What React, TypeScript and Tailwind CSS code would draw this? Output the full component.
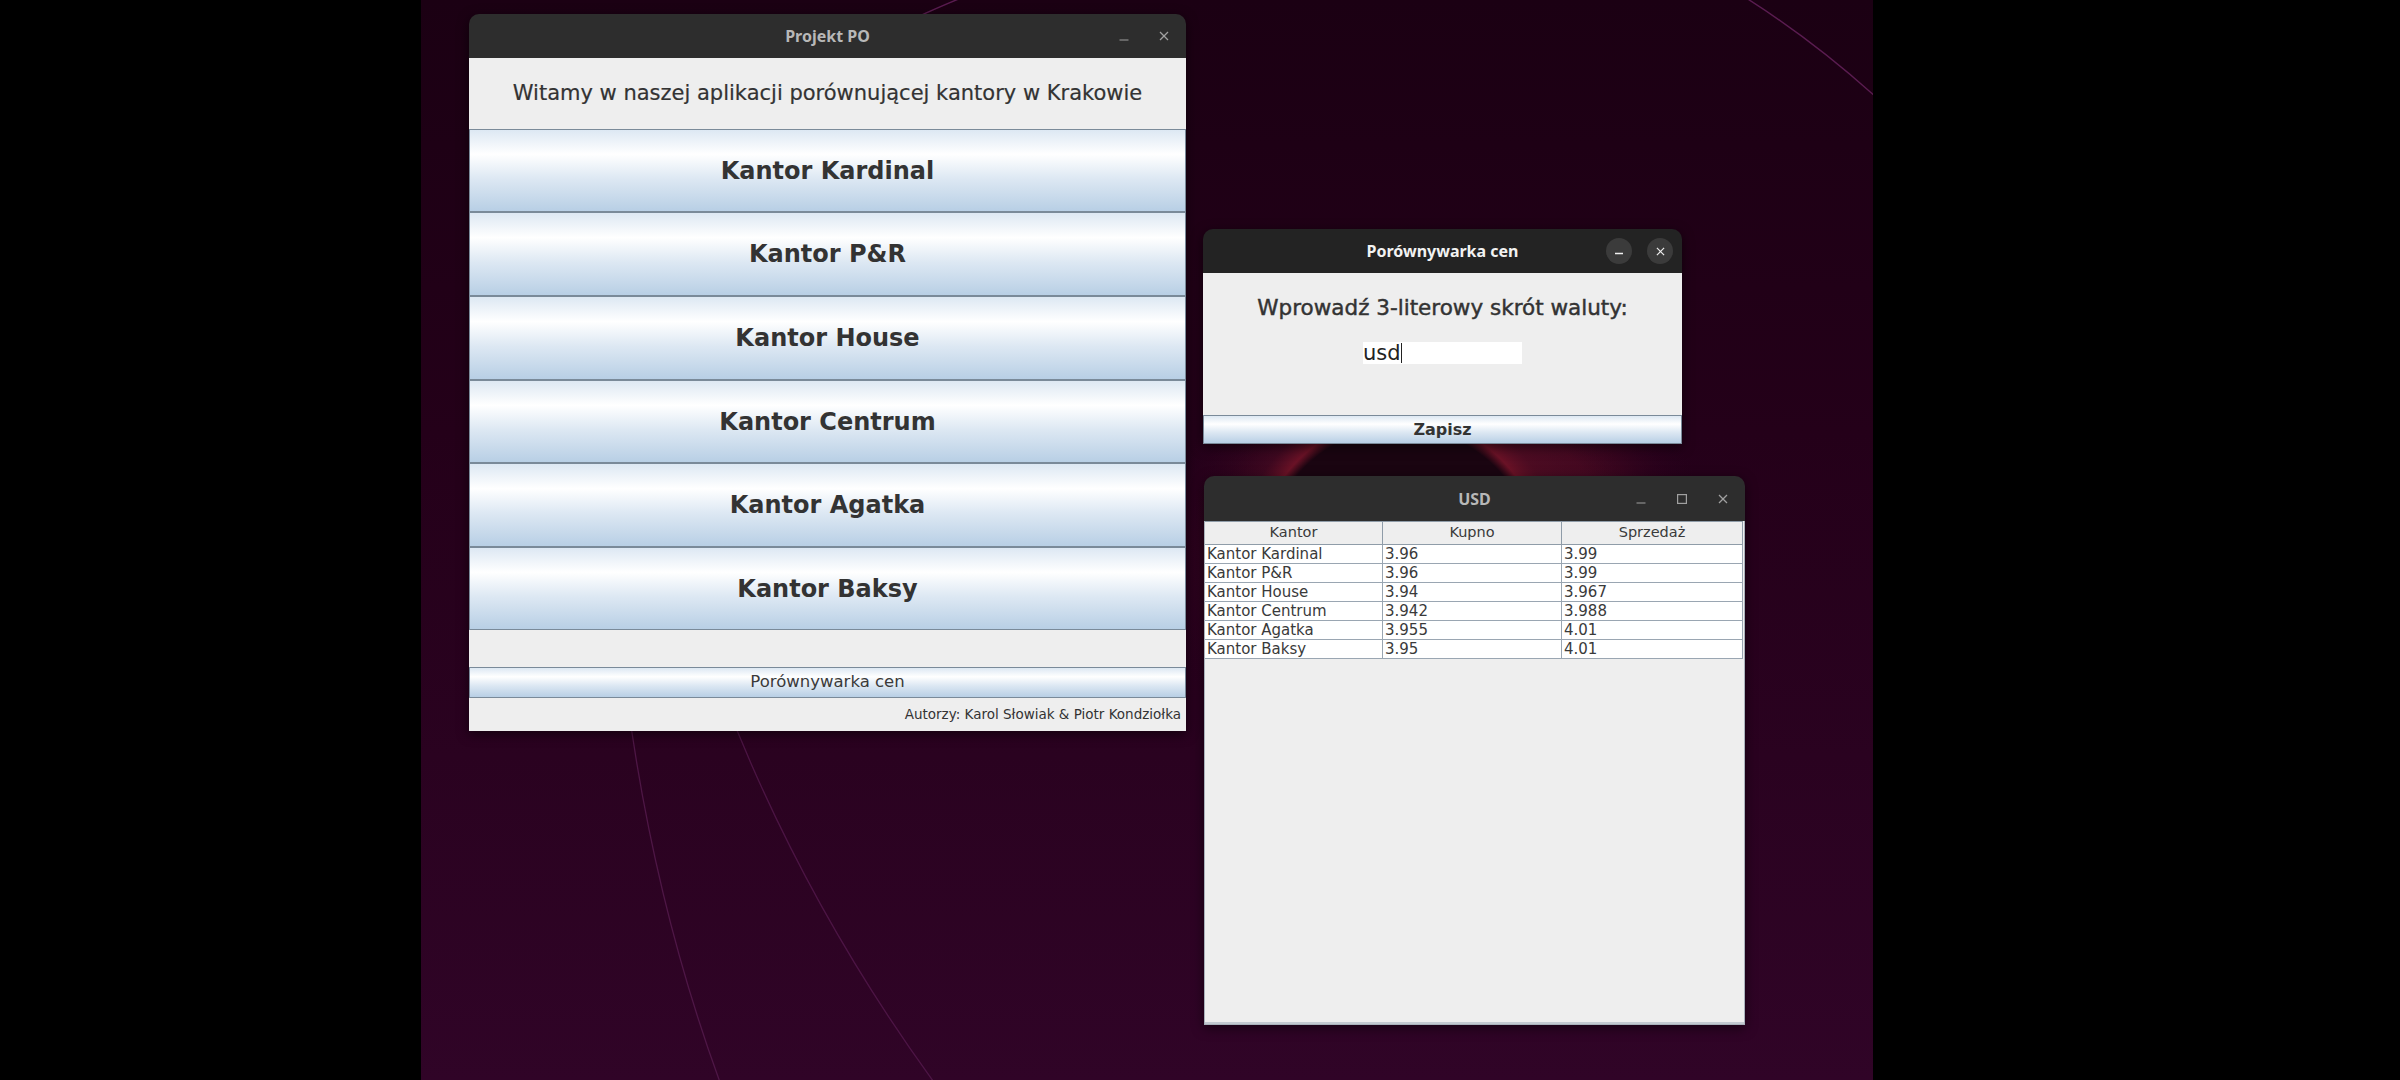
import React from "react";

const GRAD =
  "bg-[linear-gradient(to_bottom,#dde8f3_0%,#ffffff_30%,#dde8f3_60%,#b8cfe5_100%)]";

function MinLine({ color }: { color: string }) {
  return (
    <svg width="10" height="10" viewBox="0 0 10 10">
      <line x1="0.5" y1="9" x2="9.5" y2="9" stroke={color} strokeWidth="1.2" />
    </svg>
  );
}

function CloseX({ color, size = 10 }: { color: string; size?: number }) {
  return (
    <svg width={size} height={size} viewBox="0 0 10 10">
      <line x1="1" y1="1" x2="9" y2="9" stroke={color} strokeWidth="1.3" />
      <line x1="9" y1="1" x2="1" y2="9" stroke={color} strokeWidth="1.3" />
    </svg>
  );
}

function MaxBox({ color }: { color: string }) {
  return (
    <svg width="10" height="10" viewBox="0 0 10 10">
      <rect x="0.6" y="0.6" width="8.8" height="8.8" fill="none" stroke={color} strokeWidth="1.2" />
    </svg>
  );
}

function Wallpaper() {
  return (
    <svg className="absolute inset-0" width="1452" height="1080" viewBox="0 0 1452 1080">
      <defs>
        <radialGradient id="halo" cx="1040" cy="560" r="250" gradientUnits="userSpaceOnUse">
          <stop offset="0" stopColor="#6a1226" stopOpacity="0.9" />
          <stop offset="0.6" stopColor="#5a0e24" stopOpacity="0.7" />
          <stop offset="1" stopColor="#2a0320" stopOpacity="0" />
        </radialGradient>
        <radialGradient id="glow" cx="979" cy="562" r="240" gradientUnits="userSpaceOnUse">
          <stop offset="0" stopColor="#1a0511" />
          <stop offset="0.56" stopColor="#1a0511" />
          <stop offset="0.6" stopColor="#6a1226" />
          <stop offset="0.68" stopColor="#4a0c22" stopOpacity="0.6" />
          <stop offset="1" stopColor="#2a0320" stopOpacity="0" />
        </radialGradient>
      </defs>
      <circle cx="1040" cy="560" r="250" fill="url(#halo)" />
      <circle cx="979" cy="562" r="240" fill="url(#glow)" />
      <path d="M 545 -4 Q 500 14 440 44" fill="none" stroke="#6a2360" strokeOpacity="0.8" strokeWidth="1.4" />
      <path d="M 1322 -4 Q 1392 40 1456 98" fill="none" stroke="#6a2360" strokeOpacity="0.8" strokeWidth="1.4" />
      <path d="M 205 690 Q 232 900 300 1085" fill="none" stroke="#5a1d52" strokeOpacity="0.75" strokeWidth="1.3" />
      <path d="M 300 690 Q 380 900 515 1085" fill="none" stroke="#5a1d52" strokeOpacity="0.7" strokeWidth="1.3" />
    </svg>
  );
}

function TitleBar({
  title,
  bg,
  textColor,
  controls,
}: {
  title: string;
  bg: string;
  textColor: string;
  controls: React.ReactNode;
}) {
  return (
    <div className={`grid grid-cols-[1fr_auto_1fr] items-center h-[44px] shrink-0 ${bg}`}>
      <div />
      <div className={`font-['Noto_Sans',sans-serif] font-bold text-[16px] leading-none ${textColor}`}>{title}</div>
      <div className="flex justify-end items-center">{controls}</div>
    </div>
  );
}

const kantory = [
  { name: "Kantor Kardinal", h: "h-[83px]" },
  { name: "Kantor P&R", h: "h-[84px]" },
  { name: "Kantor House", h: "h-[84px]" },
  { name: "Kantor Centrum", h: "h-[83px]" },
  { name: "Kantor Agatka", h: "h-[84px]" },
  { name: "Kantor Baksy", h: "h-[83px]" },
];

const rows = [
  ["Kantor Kardinal", "3.96", "3.99"],
  ["Kantor P&R", "3.96", "3.99"],
  ["Kantor House", "3.94", "3.967"],
  ["Kantor Centrum", "3.942", "3.988"],
  ["Kantor Agatka", "3.955", "4.01"],
  ["Kantor Baksy", "3.95", "4.01"],
];

function MainWindow() {
  return (
    <div className="absolute left-[48px] top-[14px] w-[717px] h-[717px] flex flex-col rounded-t-[10px] overflow-hidden shadow-[0_3px_12px_rgba(0,0,0,0.55)] font-['DejaVu_Sans',sans-serif] text-[#333333]">
      <TitleBar
        title="Projekt PO"
        bg="bg-[#2d2d2d]"
        textColor="text-[#b8b8b8]"
        controls={
          <div className="flex items-center gap-[30px] pr-[17px]">
            <MinLine color="#a0a0a0" />
            <CloseX color="#a0a0a0" />
          </div>
        }
      />
      <div className="h-[71px] shrink-0 bg-[#eeeeee] flex items-center justify-center text-[21px] [-webkit-text-stroke:0.2px_#333333]">
        Witamy w naszej aplikacji porównującej kantory w Krakowie
      </div>
      {kantory.map((k) => (
        <div
          key={k.name}
          className={`${k.h} shrink-0 border border-[#7a8a99] ${GRAD} flex items-center justify-center text-[24px] font-bold`}
        >
          {k.name}
        </div>
      ))}
      <div className="h-[37px] shrink-0 bg-[#eeeeee]" />
      <div className={`h-[31px] shrink-0 border border-[#7a8a99] ${GRAD} flex items-center justify-center text-[16.5px] text-[#3a3a3a]`}>
        Porównywarka cen
      </div>
      <div className="h-[33px] shrink-0 bg-[#eeeeee] flex items-center justify-end pr-[5px] text-[13.5px]">
        Autorzy: Karol Słowiak &amp; Piotr Kondziołka
      </div>
    </div>
  );
}

function DialogWindow() {
  return (
    <div className="absolute left-[782px] top-[229px] w-[479px] h-[215px] flex flex-col rounded-t-[10px] overflow-hidden shadow-[0_3px_12px_rgba(0,0,0,0.55)] font-['DejaVu_Sans',sans-serif] text-[#333333]">
      <TitleBar
        title="Porównywarka cen"
        bg="bg-[#232323]"
        textColor="text-[#f2f2f2]"
        controls={
          <div className="flex items-center gap-[15px] pr-[9px]">
            <div className="w-[26px] h-[26px] rounded-full bg-[#3b3b3b] flex items-center justify-center">
              <svg width="10" height="10" viewBox="0 0 10 10">
                <line x1="1" y1="7.5" x2="9" y2="7.5" stroke="#f0f0f0" strokeWidth="1.4" />
              </svg>
            </div>
            <div className="w-[26px] h-[26px] rounded-full bg-[#3b3b3b] flex items-center justify-center">
              <CloseX color="#f0f0f0" size={9} />
            </div>
          </div>
        }
      />
      <div className="h-[142px] shrink-0 bg-[#eeeeee] flex flex-col items-center pt-[23px]">
        <div className="text-[21.5px] leading-[24px] [-webkit-text-stroke:0.45px_#333333]">Wprowadź 3-literowy skrót waluty:</div>
        <div className="mt-[22px] w-[159px] h-[22px] bg-white flex items-center text-[21px] leading-none text-[#222222]">
          <span>usd</span>
          <span className="w-[1px] h-[20px] bg-[#222222]" />
        </div>
      </div>
      <div className={`h-[29px] shrink-0 border border-[#7a8a99] ${GRAD} flex items-center justify-center text-[16px] font-bold`}>
        Zapisz
      </div>
    </div>
  );
}

function TableWindow() {
  const cols = ["w-[178px]", "w-[179px]", "w-[181px]"];
  return (
    <div className="absolute left-[783px] top-[476px] w-[541px] h-[549px] flex flex-col rounded-t-[10px] overflow-hidden shadow-[0_3px_12px_rgba(0,0,0,0.55)] font-['DejaVu_Sans',sans-serif] text-[#3a3a3a]">
      <div className="grid grid-cols-[1fr_auto_1fr] items-center h-[45px] shrink-0 bg-[#2d2d2d]">
        <div />
        <div className="font-['Noto_Sans',sans-serif] font-bold text-[16px] leading-none text-[#b8b8b8]">USD</div>
        <div className="flex justify-end items-center gap-[31px] pr-[17px]">
          <MinLine color="#a0a0a0" />
          <MaxBox color="#a0a0a0" />
          <CloseX color="#a0a0a0" />
        </div>
      </div>
      <div className="flex-1 bg-[#eeeeee] border-x border-b border-[#a9b2bb] flex flex-col">
        <div className="flex h-[24px] shrink-0">
          {["Kantor", "Kupno", "Sprzedaż"].map((h, i) => (
            <div
              key={h}
              className={`${cols[i]} h-full border-r border-b border-t border-[#8f9ca8] flex items-center justify-center text-[14.5px] bg-[#eeeeee]`}
            >
              {h}
            </div>
          ))}
        </div>
        {rows.map((r) => (
          <div key={r[0]} className="flex h-[19px] shrink-0">
            {r.map((c, i) => (
              <div
                key={i}
                className={`${cols[i]} h-full border-r border-b border-[#9aa6b2] bg-white flex items-center pl-[2px] text-[15px] leading-none`}
              >
                {c}
              </div>
            ))}
          </div>
        ))}
        <div className="flex-1" />
        <div className="h-[2px] bg-[#c3cad1]" />
      </div>
    </div>
  );
}

export default function App() {
  return (
    <div className="flex w-[2400px] h-[1080px] overflow-hidden bg-black">
      <div className="w-[421px] shrink-0 bg-black" />
      <div className="relative w-[1452px] h-[1080px] shrink-0 overflow-hidden bg-[linear-gradient(to_bottom,#1b0013_0%,#240019_40%,#300427_100%)]">
        <Wallpaper />
        <MainWindow />
        <DialogWindow />
        <TableWindow />
      </div>
      <div className="flex-1 bg-black" />
    </div>
  );
}
